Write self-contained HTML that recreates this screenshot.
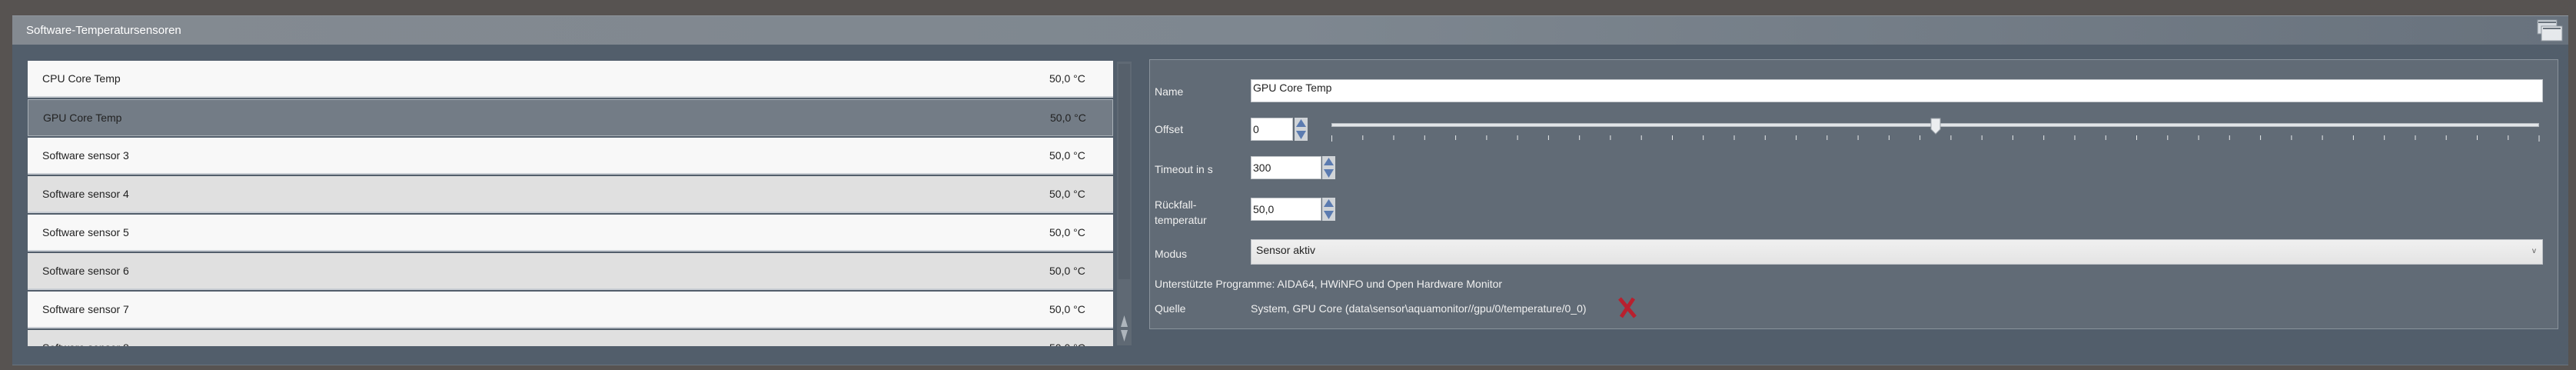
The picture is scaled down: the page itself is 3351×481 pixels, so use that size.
<!DOCTYPE html>
<html><head><meta charset="utf-8"><style>
*{margin:0;padding:0;box-sizing:border-box}
body{width:3351px;height:481px;background:#575351;position:relative;overflow:hidden;font-family:"Liberation Sans",sans-serif;font-size:14px;color:#222}
.a{position:absolute}
.hdr{left:16px;top:20px;width:3325px;height:38px;background:linear-gradient(90deg,#848a91 0%,#7e8790 50%,#68727d 100%);border-top:1px solid #8e959c}
.body{left:16px;top:58px;width:3325px;height:417px;background:#525e6b;border-bottom:1px solid #6a747e}
.row{position:absolute;left:36px;width:1412px;height:48px;background:#f8f8f8;border-bottom:2px solid #c9ced4}
.row span{position:absolute;top:15px;font-size:14px}
.row .n{left:19px}.row .v{left:1329px}
.g{background:#e0e0e0}
.sel{background:#737c86;border:1px solid #a9b0b7}
.lbl{position:absolute;left:1502px;color:#f0f0f0;font-size:14px}
.inp{position:absolute;background:#fff;border:1px solid #c2c6ca;font-size:14px;padding:3px 2px}
.spin{position:absolute;width:17px;height:30px}
</style></head><body>
<div class="a hdr"></div>
<div class="a" style="left:34px;top:31px;color:#fff;font-size:15px">Software-Temperatursensoren</div>
<svg class="a" style="left:3300px;top:25px" width="34" height="29"><rect x="1" y="1" width="25" height="18" fill="#d8dde2" stroke="#8a939c"/><rect x="2" y="3" width="23" height="2" fill="#6a737c"/><rect x="6" y="9" width="27" height="19" fill="#e6e9ec" stroke="#8a939c"/><rect x="8" y="11" width="23" height="2" fill="#6a737c"/></svg>
<div class="a body"></div>
<div class="row" style="top:79px"><span class="n">CPU Core Temp</span><span class="v">50,0 °C</span></div>
<div class="row sel" style="top:129px"><span class="n">GPU Core Temp</span><span class="v">50,0 °C</span></div>
<div class="row" style="top:179px"><span class="n">Software sensor 3</span><span class="v">50,0 °C</span></div>
<div class="row g" style="top:229px"><span class="n">Software sensor 4</span><span class="v">50,0 °C</span></div>
<div class="row" style="top:279px"><span class="n">Software sensor 5</span><span class="v">50,0 °C</span></div>
<div class="row g" style="top:329px"><span class="n">Software sensor 6</span><span class="v">50,0 °C</span></div>
<div class="row" style="top:379px"><span class="n">Software sensor 7</span><span class="v">50,0 °C</span></div>
<div class="row g" style="top:429px;height:21px;overflow:hidden;border:none"><span class="n">Software sensor 8</span><span class="v">50,0 °C</span></div>
<div class="a" style="left:1453px;top:80px;width:19px;height:369px;background:#5f6974"></div>
<div class="a" style="left:1455px;top:83px;width:15px;height:280px;background:#56606b"></div>
<svg class="a" style="left:1455px;top:408px" width="15" height="38"><path d="M3 17L7.5 2L12 17Z" fill="#aeb5bc"/><path d="M3 21L7.5 36L12 21Z" fill="#aeb5bc"/></svg>
<div class="a" style="left:1495px;top:77px;width:1833px;height:351px;background:#616b76;border:1px solid #8a939c"></div>
<div class="lbl" style="top:111px">Name</div>
<div class="inp" style="left:1627px;top:103px;width:1681px;height:30px;padding:2px 2px">GPU Core Temp</div>
<div class="lbl" style="top:160px">Offset</div>
<div class="inp" style="left:1627px;top:153px;width:55px;height:30px;padding-top:6px">0</div>
<svg class="spin" style="left:1684px;top:153px"><rect width="17" height="30" fill="#d0d4d8"/><path d="M2 12L8.5 2L15 12Z" fill="#5b7bb0"/><path d="M2 17L8.5 28L15 17Z" fill="#5b7bb0"/></svg>
<div class="a" style="left:1732px;top:160px;width:1571px;height:5px;background:#e2e5e8;border:1px solid #b4bac0"></div>
<svg class="a" style="left:1730px;top:176px" width="1580" height="8" id="tk"></svg>
<svg class="a" style="left:2511px;top:153px" width="14" height="22"><path d="M1 1H13V15L7 21L1 15Z" fill="#eceef0" stroke="#9aa1a8"/></svg>
<div class="lbl" style="top:212px">Timeout in s</div>
<div class="inp" style="left:1627px;top:203px;width:92px;height:30px;padding-top:6px">300</div>
<svg class="spin" style="left:1720px;top:203px"><rect width="17" height="30" fill="#d0d4d8"/><path d="M2 12L8.5 2L15 12Z" fill="#5b7bb0"/><path d="M2 17L8.5 28L15 17Z" fill="#5b7bb0"/></svg>
<div class="lbl" style="top:256px;line-height:20px">Rückfall-<br>temperatur</div>
<div class="inp" style="left:1627px;top:257px;width:92px;height:30px;padding-top:6px">50,0</div>
<svg class="spin" style="left:1720px;top:257px"><rect width="17" height="30" fill="#d0d4d8"/><path d="M2 12L8.5 2L15 12Z" fill="#5b7bb0"/><path d="M2 17L8.5 28L15 17Z" fill="#5b7bb0"/></svg>
<div class="lbl" style="top:322px">Modus</div>
<div class="a" style="left:1627px;top:311px;width:1681px;height:33px;background:linear-gradient(#f0f0f0,#e4e4e4);border:1px solid #bfc3c7;padding:5px 6px;font-size:14px">Sensor aktiv<span style="position:absolute;right:8px;top:9px;font-size:10px;color:#555">v</span></div>
<div class="lbl" style="top:361px">Unterstützte Programme: AIDA64, HWiNFO und Open Hardware Monitor</div>
<div class="lbl" style="top:393px">Quelle</div>
<div class="lbl" style="left:1627px;top:393px">System, GPU Core (data\sensor\aquamonitor//gpu/0/temperature/0_0)</div>
<svg class="a" style="left:2103px;top:386px" width="28" height="28"><path d="M4 2L24 26M22 2L6 26" stroke="#b8202e" stroke-width="5"/></svg>
<script>
var s='';for(var i=0;i<40;i++){var x=2+i*40.27;s+='<rect x="'+x.toFixed(1)+'" y="0" width="1" height="'+(i==0||i==39?8:6)+'" fill="#e8eaec"/>';}document.getElementById('tk').innerHTML=s;
</script>
</body></html>
